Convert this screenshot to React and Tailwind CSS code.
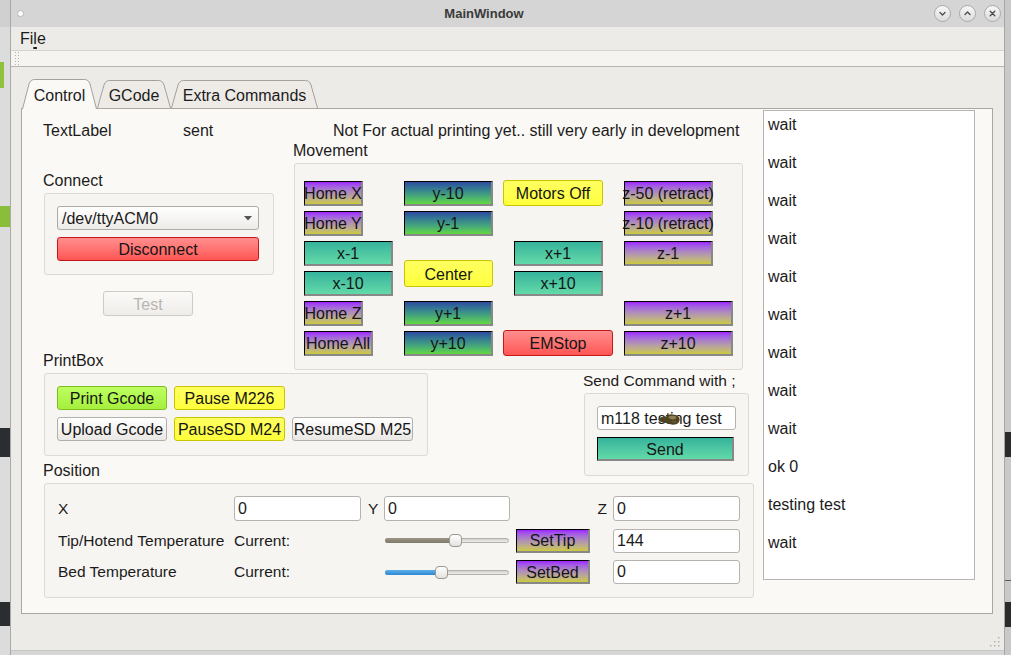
import React from 'react';

const PURPLE = 'bg-linear-to-b from-[#9e1cfd] to-[#cdca35] border border-black border-r-2 border-b-2 border-r-[#888888] border-b-[#888888]';
const OCEAN = 'bg-linear-to-b from-[#2f4b9f] to-[#62d83a] border border-black border-r-2 border-b-2 border-r-[#888888] border-b-[#888888]';
const TEAL = 'bg-linear-to-b from-[#35b39c] to-[#63daa8] border border-black border-r-2 border-b-2 border-r-[#888888] border-b-[#888888]';
const YELLOW = 'bg-linear-to-b from-[#ffff60] to-[#ffff3a] border border-[#c8c400] rounded-[3px]';
const RED = 'bg-linear-to-b from-[#ff8e8e] to-[#ff5454] border border-[#c41818] rounded-[3px]';
const LIME = 'bg-linear-to-b from-[#bdff60] to-[#a6ef3c] border border-[#7fbd22] rounded-[3px]';
const PLAIN = 'bg-linear-to-b from-white to-[#eae8e5] border border-[#b3b0ac] rounded-[3px]';
const GROUP = 'border border-[#dddad6] rounded-[3px] bg-[#f7f5f2]';
const FIELD = 'bg-white border border-[#b6b3af] rounded-[3px] pl-[3px] flex items-center text-[16px]';

function Btn({ look, size, children, extra = '' }) {
  return (
    <div className={`${look} ${size} ${extra} flex items-center justify-center whitespace-nowrap text-[#151515]`}>
      <span className="relative top-px">{children}</span>
    </div>
  );
}

function Label({ children, extra = '' }) {
  return <div className={`relative top-px ${extra}`}>{children}</div>;
}

function LeftStrip() {
  return (
    <div className="w-[10px] h-full flex flex-col bg-[#dcdcdc]">
      <div className="h-[27px] bg-[#d0d0d0]" />
      <div className="h-[35px]" />
      <div className="h-[26px] w-[4px] bg-[#8fc23c]" />
      <div className="h-[118px]" />
      <div className="h-[21px] bg-[#8abd3a]" />
      <div className="h-[201px]" />
      <div className="h-[29px] bg-[#2b2e31]" />
      <div className="h-[145px]" />
      <div className="h-[24px] bg-[#2b2e31]" />
      <div className="flex-1" />
    </div>
  );
}

function RightStrip() {
  return (
    <div className="w-[7px] h-full flex flex-col bg-[#c9c9c9] border-l border-[#a6a6a6]">
      <div className="h-[432px]" />
      <div className="h-[25px] bg-[#2b2b2b]" />
      <div className="h-[123px]" />
      <div className="h-px bg-[#5a5a5a]" />
      <div className="h-[21px]" />
      <div className="h-[25px] bg-[#2b2b2b]" />
      <div className="flex-1" />
    </div>
  );
}

function CircleBtn({ children }) {
  return (
    <div className="w-[17px] h-[17px] rounded-full border border-[#aaaaaa] bg-linear-to-b from-[#f7f7f7] to-[#dcdcdc] flex items-center justify-center">
      <svg width="9" height="9" viewBox="0 0 9 9" fill="none" stroke="#4a4a4a" strokeWidth="1.3" strokeLinecap="round" strokeLinejoin="round">
        {children}
      </svg>
    </div>
  );
}

function TitleBar() {
  return (
    <div className="h-[27px] bg-[#d5d5d5] flex items-center">
      <div className="w-[23px] flex items-center">
        <div className="ml-[6px] w-[7px] h-[7px] rounded-full bg-white border border-[#b8b8b8]" />
      </div>
      <div className="flex-1 text-center text-[13px] font-bold text-[#3a3a3a]">MainWindow</div>
      <div className="w-[70px] flex items-center gap-[8px]">
        <CircleBtn><path d="M2 3.5 L4.5 6 L7 3.5" /></CircleBtn>
        <CircleBtn><path d="M2 5.5 L4.5 3 L7 5.5" /></CircleBtn>
        <CircleBtn><path d="M2.2 2.2 L6.8 6.8 M6.8 2.2 L2.2 6.8" /></CircleBtn>
      </div>
    </div>
  );
}

function MenuBar() {
  return (
    <div className="h-[23px] bg-[#edebe7] flex items-center pl-[9px]">
      <span>
        Fi<span className="underline underline-offset-[3px] decoration-[1.5px]">l</span>e
      </span>
    </div>
  );
}

function ToolBar() {
  return (
    <div className="h-[17px] bg-[#f6f4f0] border-t border-b border-t-[#d6d3cf] border-b-[#b8b5b1] flex items-center pl-[4px]">
      <svg width="4" height="13" viewBox="0 0 4 13">
        {[0, 3, 6, 9, 12].map((y) => (
          <g key={y}>
            <rect x="0" y={y} width="1" height="1" fill="#b3b0ac" />
            <rect x="3" y={y} width="1" height="1" fill="#b3b0ac" />
          </g>
        ))}
      </svg>
    </div>
  );
}

function Tab({ w, size, label, selected }) {
  const h = selected ? 30 : 28;
  const d = `M0.5 ${h} L7 5 Q8.5 0.5 12.5 0.5 L${w - 12.5} 0.5 Q${w - 8.5} 0.5 ${w - 7} 5 L${w - 0.5} ${h}`;
  return (
    <div className={`relative ${size} ${selected ? 'h-[30px] z-10' : 'h-[28px] mb-px'} flex items-center justify-center pt-[3px]`}>
      <svg className="absolute inset-0" width={w} height={h} viewBox={`0 0 ${w} ${h}`}>
        <path d={d} fill={selected ? '#fbf9f6' : '#eeebe7'} stroke="#a3a09c" strokeWidth="1" />
      </svg>
      <span className="relative">{label}</span>
    </div>
  );
}

function Tabs() {
  return (
    <div className="ml-[11px] h-[30px] flex items-end relative z-10">
      <Tab w={75} size="w-[75px]" label="Control" selected />
      <Tab w={74} size="w-[74px]" label="GCode" />
      <Tab w={147} size="w-[147px]" label="Extra Commands" />
    </div>
  );
}

function ConnectBox() {
  return (
    <div className={`ml-px mt-[4px] w-[230px] h-[82px] ${GROUP} pl-[12px] pt-[12px] flex flex-col gap-[7px]`}>
      <div className="w-[202px] h-[24px] bg-linear-to-b from-white to-[#eeece9] border border-[#aeaba7] rounded-[3px] flex items-center pl-[4px] pr-[6px]">
        <span className="flex-1 relative top-px">/dev/ttyACM0</span>
        <svg width="8" height="5" viewBox="0 0 8 5"><path d="M0 0 L8 0 L4 4.5Z" fill="#555555" /></svg>
      </div>
      <Btn look={RED} size="w-[202px] h-[24px]">Disconnect</Btn>
    </div>
  );
}

function Movement() {
  return (
    <div className={`ml-px mt-[4px] w-[449px] h-[207px] ${GROUP} pl-[9px] pt-[17px]`}>
      <div className="grid grid-cols-[100px_99px_121px_120px] grid-rows-[25px_25px_25px_25px_25px_25px] gap-y-[5px]">
        <Btn look={PURPLE} size="w-[59px] h-[25px]" extra="col-start-1 row-start-1">Home X</Btn>
        <Btn look={OCEAN} size="w-[89px] h-[25px]" extra="col-start-2 row-start-1">y-10</Btn>
        <Btn look={YELLOW} size="w-[100px] h-[26px]" extra="col-start-3 row-start-1 -mt-px">Motors Off</Btn>
        <Btn look={PURPLE} size="w-[89px] h-[25px]" extra="col-start-4 row-start-1">z-50 (retract)</Btn>

        <Btn look={PURPLE} size="w-[59px] h-[25px]" extra="col-start-1 row-start-2">Home Y</Btn>
        <Btn look={OCEAN} size="w-[89px] h-[25px]" extra="col-start-2 row-start-2">y-1</Btn>
        <Btn look={PURPLE} size="w-[89px] h-[25px]" extra="col-start-4 row-start-2">z-10 (retract)</Btn>

        <Btn look={TEAL} size="w-[89px] h-[25px]" extra="col-start-1 row-start-3">x-1</Btn>
        <Btn look={YELLOW} size="w-[89px] h-[27px]" extra="col-start-2 row-start-3 row-span-2 self-start mt-[19px]">Center</Btn>
        <Btn look={TEAL} size="w-[89px] h-[25px]" extra="col-start-3 row-start-3 ml-[11px]">x+1</Btn>
        <Btn look={PURPLE} size="w-[89px] h-[25px]" extra="col-start-4 row-start-3">z-1</Btn>

        <Btn look={TEAL} size="w-[89px] h-[25px]" extra="col-start-1 row-start-4">x-10</Btn>
        <Btn look={TEAL} size="w-[89px] h-[25px]" extra="col-start-3 row-start-4 ml-[11px]">x+10</Btn>

        <Btn look={PURPLE} size="w-[59px] h-[25px]" extra="col-start-1 row-start-5">Home Z</Btn>
        <Btn look={OCEAN} size="w-[89px] h-[25px]" extra="col-start-2 row-start-5">y+1</Btn>
        <Btn look={PURPLE} size="w-[109px] h-[25px]" extra="col-start-4 row-start-5">z+1</Btn>

        <Btn look={PURPLE} size="w-[69px] h-[25px]" extra="col-start-1 row-start-6">Home All</Btn>
        <Btn look={OCEAN} size="w-[89px] h-[25px]" extra="col-start-2 row-start-6">y+10</Btn>
        <Btn look={RED} size="w-[110px] h-[26px]" extra="col-start-3 row-start-6 -mt-px">EMStop</Btn>
        <Btn look={PURPLE} size="w-[109px] h-[25px]" extra="col-start-4 row-start-6">z+10</Btn>
      </div>
    </div>
  );
}

function PrintBox() {
  return (
    <div className={`ml-px mt-[3px] w-[384px] h-[83px] ${GROUP} pl-[12px] pt-[12px] flex flex-col gap-[7px]`}>
      <div className="flex gap-[7px]">
        <Btn look={LIME} size="w-[110px] h-[24px]">Print Gcode</Btn>
        <Btn look={YELLOW} size="w-[111px] h-[24px]">Pause M226</Btn>
      </div>
      <div className="flex gap-[7px]">
        <Btn look={PLAIN} size="w-[110px] h-[24px]">Upload Gcode</Btn>
        <Btn look={YELLOW} size="w-[111px] h-[24px]">PauseSD M24</Btn>
        <Btn look={PLAIN} size="w-[121px] h-[24px]">ResumeSD M25</Btn>
      </div>
    </div>
  );
}

function SendBox() {
  return (
    <div className={`ml-px mt-[4px] w-[165px] h-[83px] ${GROUP} pl-[12px] pt-[12px] flex flex-col gap-[7px]`}>
      <div className={`relative w-[139px] h-[24px] ${FIELD}`}>
        <span className="relative top-px">m118 testing test</span>
        <svg className="absolute left-[59px] top-[6px]" width="24" height="13" viewBox="0 0 24 13">
          <path d="M1 6 Q4 3 9 3.5 L12 1.5 Q18 0.5 22 4 Q24 8 20 11 Q15 12.5 11 10.5 L6 9.5 Q2 9 1 6Z" fill="#4e4423" />
          <path d="M11 4 Q15 2 19 3.5 Q20 6 16 6.5 Q13 6.5 11 4Z" fill="#8d7d50" />
          <path d="M14 8 Q18 7.5 20 9 Q17 10.5 14 8Z" fill="#6d6038" />
        </svg>
      </div>
      <Btn look={TEAL} size="w-[137px] h-[24px]">Send</Btn>
    </div>
  );
}

function Slider({ fill, fillW, handle }) {
  return (
    <div className="relative w-[124px] h-[13px] ml-px">
      <div className="absolute left-0 right-0 top-[4px] h-[5px] rounded-full bg-linear-to-b from-[#d3d0cc] to-[#f0eeeb] border border-[#b3b0ac]" />
      <div className={`absolute left-0 top-[4px] h-[5px] rounded-full ${fill} ${fillW}`} />
      <div className={`absolute top-0 w-[13px] h-[13px] rounded-[4px] border border-[#9a9793] bg-linear-to-b from-white to-[#e4e2df] ${handle}`} />
    </div>
  );
}

function PositionBox() {
  return (
    <div className={`ml-px mt-[4px] w-[710px] h-[115px] ${GROUP} pl-[13px] pt-[12px]`}>
      <div className="grid grid-cols-[176px_127px_23px_126px_103px_127px] grid-rows-[25px_25px_24px] gap-y-[7px] items-center text-[15.5px]">
        <div>X</div>
        <div className={`h-[25px] ${FIELD}`}>0</div>
        <div className="pl-[7px]">Y</div>
        <div className={`h-[25px] ${FIELD}`}>0</div>
        <div className="text-right pr-[6px]">Z</div>
        <div className={`h-[25px] ${FIELD}`}>0</div>

        <div>Tip/Hotend Temperature</div>
        <div>Current:</div>
        <div />
        <Slider fill="bg-linear-to-b from-[#9a9585] to-[#7e7969]" fillW="w-[68px]" handle="left-[64px]" />
        <Btn look={PURPLE} size="w-[74px] h-[24px]" extra="ml-[6px] text-[16px]">SetTip</Btn>
        <div className={`h-[24px] ${FIELD}`}>144</div>

        <div>Bed Temperature</div>
        <div>Current:</div>
        <div />
        <Slider fill="bg-linear-to-b from-[#5cb0ea] to-[#2b88d2]" fillW="w-[54px]" handle="left-[50px]" />
        <Btn look={PURPLE} size="w-[74px] h-[24px]" extra="ml-[6px] text-[16px]">SetBed</Btn>
        <div className={`h-[24px] ${FIELD}`}>0</div>
      </div>
    </div>
  );
}

function LeftPart() {
  return (
    <div className="w-[741px] pl-[21px] pt-[12px] flex flex-col">
      <div className="flex h-[18px] relative top-px">
        <div className="w-[140px]">TextLabel</div>
        <div className="w-[150px]">sent</div>
        <div>Not For actual printing yet.. still very early in development</div>
      </div>

      <div className="flex mt-[2px]">
        <div className="w-[250px] flex flex-col">
          <Label extra="mt-[30px]">Connect</Label>
          <ConnectBox />
          <div className="mt-[16px] ml-[60px] w-[90px] h-[25px] rounded-[3px] border border-[#cfccc8] bg-linear-to-b from-[#fbfaf8] to-[#efedea] text-[#b9b6b2] flex items-center justify-center">
            <span className="relative top-px">Test</span>
          </div>
          <Label extra="mt-[35px]">PrintBox</Label>
        </div>
        <div className="flex flex-col">
          <Label>Movement</Label>
          <Movement />
        </div>
      </div>

      <div className="flex">
        <div className="w-[540px] flex flex-col">
          <PrintBox />
          <Label extra="mt-[5px]">Position</Label>
        </div>
        <div className="flex flex-col">
          <Label extra="mt-px text-[15.5px]">Send Command with ;</Label>
          <SendBox />
        </div>
      </div>

      <PositionBox />
    </div>
  );
}

const LOG = ['wait', 'wait', 'wait', 'wait', 'wait', 'wait', 'wait', 'wait', 'wait', 'ok 0', 'testing test', 'wait'];

function LogList() {
  return (
    <div className="w-[212px] h-[470px] mt-px bg-white border border-[#b4b4b4] pt-[5px] pl-[4px]">
      {LOG.map((t, i) => (
        <div key={i} className="h-[38px]">{t}</div>
      ))}
    </div>
  );
}

function Grip() {
  const dots = [[10, 2], [6, 6], [10, 6], [2, 10], [6, 10], [10, 10]];
  return (
    <svg width="13" height="13" viewBox="0 0 13 13">
      {dots.map(([x, y], i) => (
        <rect key={i} x={x} y={y} width="1.5" height="1.5" fill="#b5b2ae" />
      ))}
    </svg>
  );
}

export default function App() {
  return (
    <div className="w-[1011px] h-[655px] flex overflow-hidden bg-[#d7d7d7] font-['Liberation_Sans',Arial,sans-serif] text-[16px] leading-[18px] text-[#1b1b1b]">
      <LeftStrip />
      <div className="w-[994px] h-full flex flex-col border-l border-[#a9a9a9]">
        <TitleBar />
        <MenuBar />
        <ToolBar />
        <div className="flex-1 bg-[#edebe7] pt-[12px] flex flex-col">
          <Tabs />
          <div className="ml-[10px] w-[972px] h-[506px] -mt-px border border-[#aaa7a3] bg-[#fbf9f6] flex">
            <LeftPart />
            <LogList />
          </div>
          <div className="flex-1 flex items-end justify-end pr-[3px] pb-[2px]">
            <Grip />
          </div>
        </div>
        <div className="h-[5px] bg-[#d6d6d6] border-t border-[#c6c6c6]" />
      </div>
      <RightStrip />
    </div>
  );
}
